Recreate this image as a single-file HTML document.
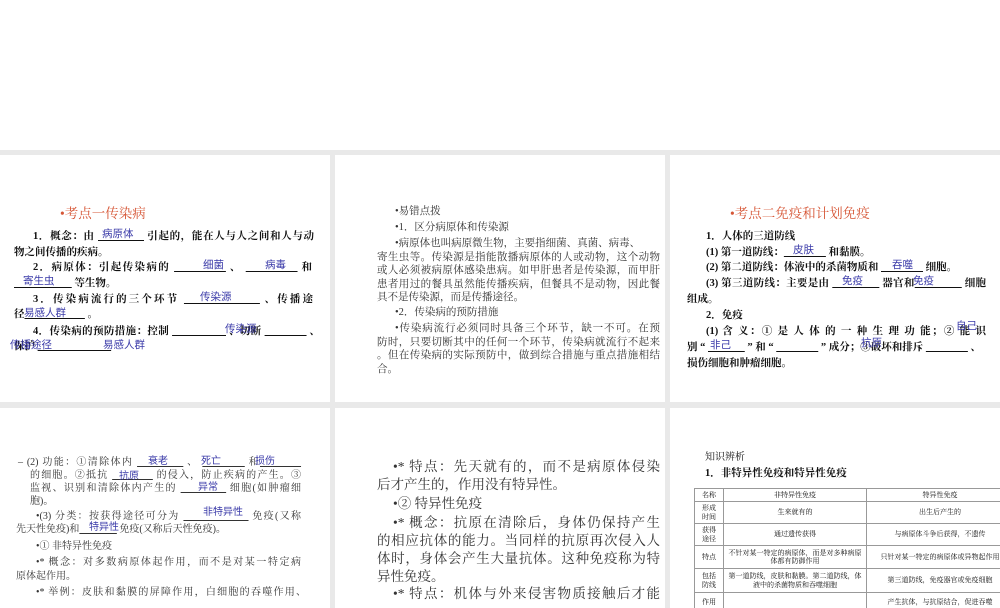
<!DOCTYPE html>
<html><head><meta charset="utf-8"><style>
*{margin:0;padding:0;box-sizing:border-box}
body{width:1000px;height:600px;overflow:hidden;background:#e9e9e9;position:relative;font-family:"Liberation Serif","Noto Serif CJK SC",serif;color:#111}
.top{position:absolute;left:0;top:0;width:1000px;height:150px;background:#fff}
.s{position:absolute;background:#fff;overflow:hidden}
.l{position:absolute;white-space:nowrap;font-size:10.5px;line-height:13px}
.j{text-align:justify;text-align-last:justify;white-space:nowrap}
.b{font-weight:bold}
.bl{position:absolute;white-space:nowrap;color:#3a3aa8;font-size:10.5px;line-height:13px;font-family:"Liberation Sans","Noto Sans CJK SC",sans-serif}
.t{position:absolute;white-space:nowrap;color:#d65535;font-size:13.5px;line-height:16px}
.g{color:#333}
.m .l{font-size:10px}
.m .bl{font-size:10px}
.k .l{font-size:13.5px;line-height:18px}
table{border-collapse:collapse;position:absolute;font-size:7px;line-height:8.5px;text-align:center}
td{border:1px solid #999;padding:1px 2px}
</style></head><body>
<div class="top"></div>

<div class="s" style="left:0;top:155px;width:330px;height:247px">
<div class="t" style="left:60px;top:51px">•考点一传染病</div>
<div class="l b j" style="left:33px;top:75px;width:281px">1．概念：由 <u>&nbsp;&nbsp;&nbsp;&nbsp;&nbsp;&nbsp;&nbsp;&nbsp;&nbsp;&nbsp;&nbsp;&nbsp;&nbsp;&nbsp;</u> 引起的，能在人与人之间和人与动</div>
<div class="bl" style="left:102px;top:73px">病原体</div>
<div class="l b" style="left:14px;top:91px">物之间传播的疾病。</div>
<div class="l b j" style="left:33px;top:106px;width:279px">2．病原体：引起传染病的 <u>&nbsp;&nbsp;&nbsp;&nbsp;&nbsp;&nbsp;&nbsp;&nbsp;&nbsp;&nbsp;&nbsp;&nbsp;&nbsp;</u> 、 <u>&nbsp;&nbsp;&nbsp;&nbsp;&nbsp;&nbsp;&nbsp;&nbsp;&nbsp;&nbsp;&nbsp;&nbsp;&nbsp;</u> 和</div>
<div class="bl" style="left:203px;top:104px">细菌</div>
<div class="bl" style="left:265px;top:104px">病毒</div>
<div class="l b" style="left:14px;top:122px"><u>&nbsp;&nbsp;&nbsp;&nbsp;&nbsp;&nbsp;&nbsp;&nbsp;&nbsp;&nbsp;&nbsp;&nbsp;&nbsp;&nbsp;&nbsp;&nbsp;&nbsp;&nbsp;&nbsp;&nbsp;&nbsp;&nbsp;</u> 等生物。</div>
<div class="bl" style="left:23px;top:120px">寄生虫</div>
<div class="l b j" style="left:33px;top:138px;width:280px">3．传染病流行的三个环节 <u>&nbsp;&nbsp;&nbsp;&nbsp;&nbsp;&nbsp;&nbsp;&nbsp;&nbsp;&nbsp;&nbsp;&nbsp;&nbsp;&nbsp;&nbsp;&nbsp;</u> 、传播途</div>
<div class="bl" style="left:200px;top:136px">传染源</div>
<div class="l b" style="left:14px;top:153px">径<u>&nbsp;&nbsp;&nbsp;&nbsp;&nbsp;&nbsp;&nbsp;&nbsp;&nbsp;&nbsp;&nbsp;&nbsp;&nbsp;&nbsp;&nbsp;&nbsp;&nbsp;&nbsp;&nbsp;&nbsp;&nbsp;&nbsp;&nbsp;</u> 。</div>
<div class="bl" style="left:24px;top:152px">易感人群</div>
<div class="l b j" style="left:33px;top:170px;width:287px">4．传染病的预防措施：控制 <u>&nbsp;&nbsp;&nbsp;&nbsp;&nbsp;&nbsp;&nbsp;&nbsp;&nbsp;&nbsp;&nbsp;&nbsp;&nbsp;&nbsp;&nbsp;&nbsp;&nbsp;&nbsp;</u> 、切断 <u>&nbsp;&nbsp;&nbsp;&nbsp;&nbsp;&nbsp;&nbsp;&nbsp;&nbsp;&nbsp;&nbsp;&nbsp;&nbsp;&nbsp;</u> 、</div>
<div class="bl" style="left:225px;top:168px">传染源</div>
<div class="l b" style="left:14px;top:185px">保护 <u>&nbsp;&nbsp;&nbsp;&nbsp;&nbsp;&nbsp;&nbsp;&nbsp;&nbsp;&nbsp;&nbsp;&nbsp;&nbsp;&nbsp;&nbsp;&nbsp;&nbsp;&nbsp;&nbsp;&nbsp;&nbsp;&nbsp;&nbsp;&nbsp;&nbsp;&nbsp;&nbsp;&nbsp;</u></div>
<div class="bl" style="left:10px;top:184px">传播途径</div>
<div class="bl" style="left:103px;top:184px">易感人群</div>
</div>

<div class="s g" style="left:335px;top:155px;width:330px;height:247px">
<div class="l" style="left:60px;top:50px">•易错点拨</div>
<div class="l" style="left:60px;top:66px">•1．区分病原体和传染源</div>
<div class="l" style="left:60px;top:82px">•病原体也叫病原微生物，主要指细菌、真菌、病毒、</div>
<div class="l j" style="left:42px;top:95.5px;width:283px">寄生虫等。传染源是指能散播病原体的人或动物，这个动物</div>
<div class="l j" style="left:42px;top:109px;width:283px">或人必须被病原体感染患病。如甲肝患者是传染源，而甲肝</div>
<div class="l j" style="left:42px;top:122.5px;width:283px">患者用过的餐具虽然能传播疾病，但餐具不是动物，因此餐</div>
<div class="l" style="left:42px;top:136px">具不是传染源，而是传播途径。</div>
<div class="l" style="left:60px;top:151px">•2．传染病的预防措施</div>
<div class="l j" style="left:60px;top:167px;width:265px">•传染病流行必须同时具备三个环节，缺一不可。在预</div>
<div class="l j" style="left:42px;top:180.5px;width:283px">防时，只要切断其中的任何一个环节，传染病就流行不起来</div>
<div class="l j" style="left:42px;top:194px;width:283px">。但在传染病的实际预防中，做到综合措施与重点措施相结</div>
<div class="l" style="left:42px;top:207.5px">合。</div>
</div>

<div class="s" style="left:670px;top:155px;width:330px;height:247px">
<div class="t" style="left:60px;top:51px">•考点二免疫和计划免疫</div>
<div class="l b" style="left:36px;top:75px">1．人体的三道防线</div>
<div class="l b" style="left:36px;top:91px">(1) 第一道防线：<u>&nbsp;&nbsp;&nbsp;&nbsp;&nbsp;&nbsp;&nbsp;&nbsp;&nbsp;&nbsp;&nbsp;&nbsp;&nbsp;&nbsp;&nbsp;&nbsp;</u> 和黏膜。</div>
<div class="bl" style="left:123px;top:89px">皮肤</div>
<div class="l b" style="left:36px;top:106px">(2) 第二道防线：体液中的杀菌物质和 <u>&nbsp;&nbsp;&nbsp;&nbsp;&nbsp;&nbsp;&nbsp;&nbsp;&nbsp;&nbsp;&nbsp;&nbsp;&nbsp;&nbsp;&nbsp;&nbsp;</u> 细胞。</div>
<div class="bl" style="left:222px;top:104px">吞噬</div>
<div class="l b j" style="left:36px;top:122px;width:280px">(3) 第三道防线：主要是由 <u>&nbsp;&nbsp;&nbsp;&nbsp;&nbsp;&nbsp;&nbsp;&nbsp;&nbsp;&nbsp;&nbsp;&nbsp;&nbsp;&nbsp;&nbsp;&nbsp;</u> 器官和<u>&nbsp;&nbsp;&nbsp;&nbsp;&nbsp;&nbsp;&nbsp;&nbsp;&nbsp;&nbsp;&nbsp;&nbsp;&nbsp;&nbsp;&nbsp;&nbsp;</u> 细胞</div>
<div class="bl" style="left:172px;top:120px">免疫</div>
<div class="bl" style="left:243px;top:120px">免疫</div>
<div class="l b" style="left:17px;top:138px">组成。</div>
<div class="l b" style="left:36px;top:154px">2．免疫</div>
<div class="l b j" style="left:36px;top:170px;width:280px">(1) 含 义：① 是 人 体 的 一 种 生 理 功 能；② 能 识</div>
<div class="bl" style="left:286px;top:165px">自己</div>
<div class="l b" style="left:17px;top:186px">别 “ <u>&nbsp;&nbsp;&nbsp;&nbsp;&nbsp;&nbsp;&nbsp;&nbsp;&nbsp;&nbsp;&nbsp;&nbsp;&nbsp;&nbsp;</u> ” 和 “ <u>&nbsp;&nbsp;&nbsp;&nbsp;&nbsp;&nbsp;&nbsp;&nbsp;&nbsp;&nbsp;&nbsp;&nbsp;&nbsp;&nbsp;&nbsp;&nbsp;</u> ” 成分；③破坏和排斥 <u>&nbsp;&nbsp;&nbsp;&nbsp;&nbsp;&nbsp;&nbsp;&nbsp;&nbsp;&nbsp;&nbsp;&nbsp;&nbsp;&nbsp;&nbsp;&nbsp;</u> 、</div>
<div class="bl" style="left:40px;top:184px">非己</div>
<div class="bl" style="left:191px;top:182px">抗原</div>
<div class="l b" style="left:17px;top:202px">损伤细胞和肿瘤细胞。</div>
</div>

<div class="s g m" style="left:0;top:408px;width:330px;height:200px">
<div class="l j" style="left:18px;top:48px;width:283px">– (2) 功能：①清除体内 <u>&nbsp;&nbsp;&nbsp;&nbsp;&nbsp;&nbsp;&nbsp;&nbsp;&nbsp;&nbsp;&nbsp;&nbsp;</u> 、 <u>&nbsp;&nbsp;&nbsp;&nbsp;&nbsp;&nbsp;&nbsp;&nbsp;&nbsp;&nbsp;&nbsp;</u> 和<u>&nbsp;&nbsp;&nbsp;&nbsp;&nbsp;&nbsp;&nbsp;&nbsp;&nbsp;&nbsp;&nbsp;</u></div>
<div class="bl" style="left:148px;top:47px">衰老</div>
<div class="bl" style="left:201px;top:47px">死亡</div>
<div class="bl" style="left:255px;top:47px">损伤</div>
<div class="l j" style="left:30px;top:61px;width:271px">的细胞。②抵抗 <u>&nbsp;&nbsp;&nbsp;&nbsp;&nbsp;&nbsp;&nbsp;&nbsp;&nbsp;&nbsp;&nbsp;</u> 的侵入，防止疾病的产生。③</div>
<div class="bl" style="left:119px;top:62px">抗原</div>
<div class="l j" style="left:30px;top:74px;width:271px">监视、识别和清除体内产生的 <u>&nbsp;&nbsp;&nbsp;&nbsp;&nbsp;&nbsp;&nbsp;&nbsp;&nbsp;&nbsp;&nbsp;&nbsp;</u> 细胞(如肿瘤细</div>
<div class="bl" style="left:198px;top:73px">异常</div>
<div class="l" style="left:30px;top:87px">胞)。</div>
<div class="l j" style="left:36px;top:102px;width:265px">•(3) 分类：按获得途径可分为 <u>&nbsp;&nbsp;&nbsp;&nbsp;&nbsp;&nbsp;&nbsp;&nbsp;&nbsp;&nbsp;&nbsp;&nbsp;&nbsp;&nbsp;&nbsp;&nbsp;&nbsp;</u> 免疫(又称</div>
<div class="bl" style="left:203px;top:98px">非特异性</div>
<div class="l" style="left:16px;top:115px">先天性免疫)和<u>&nbsp;&nbsp;&nbsp;&nbsp;&nbsp;&nbsp;&nbsp;&nbsp;&nbsp;&nbsp;&nbsp;&nbsp;&nbsp;&nbsp;&nbsp;</u> 免疫(又称后天性免疫)。</div>
<div class="bl" style="left:89px;top:113px">特异性</div>
<div class="l" style="left:36px;top:132px">•① 非特异性免疫</div>
<div class="l j" style="left:36px;top:148px;width:265px">•* 概念：对多数病原体起作用，而不是对某一特定病</div>
<div class="l" style="left:16px;top:162px">原体起作用。</div>
<div class="l j" style="left:36px;top:178px;width:270px">•* 举例：皮肤和黏膜的屏障作用，白细胞的吞噬作用、</div>
</div>

<div class="s g k" style="left:335px;top:408px;width:330px;height:200px">
<div class="l j" style="left:58px;top:50px;width:267px">•* 特点：先天就有的，而不是病原体侵染</div>
<div class="l" style="left:42px;top:68px">后才产生的，作用没有特异性。</div>
<div class="l" style="left:58px;top:87px">•② 特异性免疫</div>
<div class="l j" style="left:58px;top:106px;width:267px">•* 概念：抗原在清除后，身体仍保持产生</div>
<div class="l j" style="left:42px;top:124px;width:283px">的相应抗体的能力。当同样的抗原再次侵入人</div>
<div class="l j" style="left:42px;top:142px;width:283px">体时，身体会产生大量抗体。这种免疫称为特</div>
<div class="l" style="left:42px;top:160px">异性免疫。</div>
<div class="l j" style="left:58px;top:177px;width:267px">•* 特点：机体与外来侵害物质接触后才能</div>
</div>

<div class="s" style="left:670px;top:408px;width:330px;height:200px">
<div class="l" style="left:35px;top:43px;font-size:10px">知识辨析</div>
<div class="l b" style="left:35px;top:59px;font-size:10.5px">1．非特异性免疫和特异性免疫</div>
<table style="left:24px;top:80px;width:320px">
<tr style="height:13px"><td style="width:29px">名称</td><td style="width:143px">非特异性免疫</td><td>特异性免疫</td></tr>
<tr style="height:22px"><td>形成<br>时间</td><td>生来就有的</td><td>出生后产生的</td></tr>
<tr style="height:22px"><td>获得<br>途径</td><td>通过遗传获得</td><td>与病原体斗争后获得，不遗传</td></tr>
<tr style="height:23px"><td>特点</td><td>不针对某一特定的病原体，而是对多种病原体都有防御作用</td><td>只针对某一特定的病原体或异物起作用</td></tr>
<tr style="height:24px"><td>包括<br>防线</td><td>第一道防线，皮肤和黏膜。第二道防线，体液中的杀菌物质和吞噬细胞</td><td>第三道防线，免疫器官或免疫细胞</td></tr>
<tr style="height:20px"><td>作用</td><td></td><td>产生抗体，与抗原结合，促进吞噬</td></tr>
</table>
</div>
</body></html>
